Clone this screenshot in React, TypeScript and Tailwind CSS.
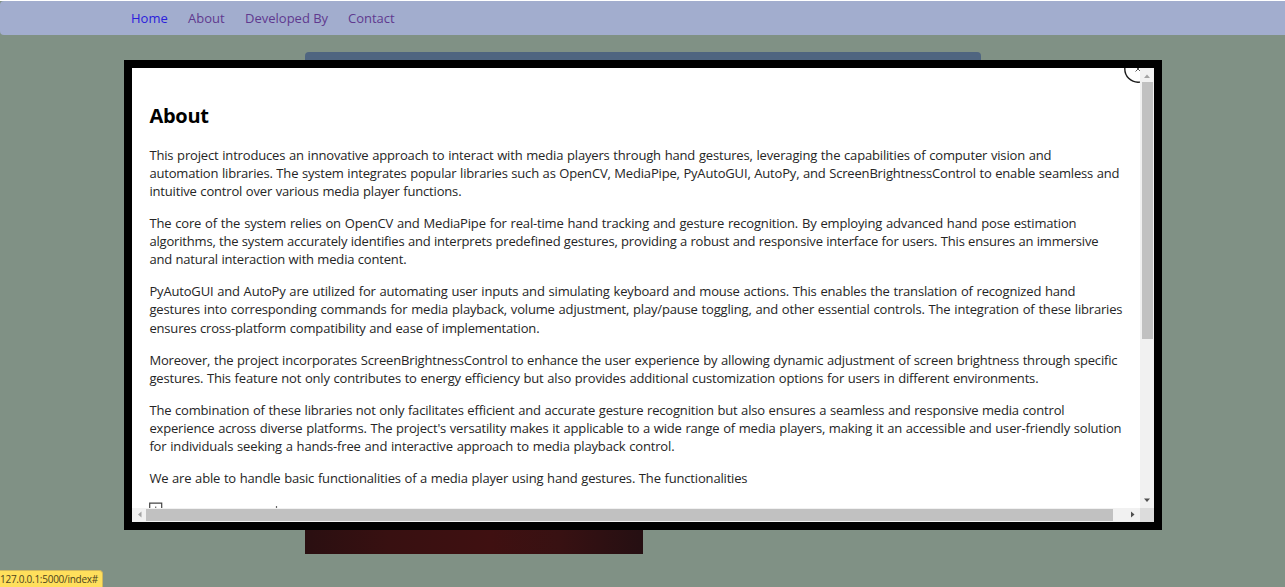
type Line = { text: string; width: string };

const paragraphs: Line[][] = [
  [
    { text: "This project introduces an innovative approach to interact with media players through hand gestures, leveraging the capabilities of computer vision and", width: "w-[902px]" },
    { text: "automation libraries. The system integrates popular libraries such as OpenCV, MediaPipe, PyAutoGUI, AutoPy, and ScreenBrightnessControl to enable seamless and", width: "w-[970px]" },
    { text: "intuitive control over various media player functions.", width: "w-[312px]" },
  ],
  [
    { text: "The core of the system relies on OpenCV and MediaPipe for real-time hand tracking and gesture recognition. By employing advanced hand pose estimation", width: "w-[927px]" },
    { text: "algorithms, the system accurately identifies and interprets predefined gestures, providing a robust and responsive interface for users. This ensures an immersive", width: "w-[949px]" },
    { text: "and natural interaction with media content.", width: "w-[257px]" },
  ],
  [
    { text: "PyAutoGUI and AutoPy are utilized for automating user inputs and simulating keyboard and mouse actions. This enables the translation of recognized hand", width: "w-[926px]" },
    { text: "gestures into corresponding commands for media playback, volume adjustment, play/pause toggling, and other essential controls. The integration of these libraries", width: "w-[973px]" },
    { text: "ensures cross-platform compatibility and ease of implementation.", width: "w-[390px]" },
  ],
  [
    { text: "Moreover, the project incorporates ScreenBrightnessControl to enhance the user experience by allowing dynamic adjustment of screen brightness through specific", width: "w-[968px]" },
    { text: "gestures. This feature not only contributes to energy efficiency but also provides additional customization options for users in different environments.", width: "w-[889px]" },
  ],
  [
    { text: "The combination of these libraries not only facilitates efficient and accurate gesture recognition but also ensures a seamless and responsive media control", width: "w-[915px]" },
    { text: "experience across diverse platforms. The project's versatility makes it applicable to a wide range of media players, making it an accessible and user-friendly solution", width: "w-[972px]" },
    { text: "for individuals seeking a hands-free and interactive approach to media playback control.", width: "w-[525px]" },
  ],
  [
    { text: "We are able to handle basic functionalities of a media player using hand gestures. The functionalities", width: "w-[598px]" },
  ],
];

function Navbar() {
  return (
    <nav className="mt-px flex h-[34px] shrink-0 items-center gap-[20px] rounded-l-[4px] bg-[#a2adce] pl-[131px] pt-[2px] text-[13px] text-[#60398f]">
      <a className="w-[37px] whitespace-nowrap text-[#2a20dc]">Home</a>
      <a className="w-[37px] whitespace-nowrap">About</a>
      <a className="w-[83px] whitespace-nowrap">Developed By</a>
      <a className="whitespace-nowrap">Contact</a>
    </nav>
  );
}

function AboutDialog() {
  return (
    <div className="absolute left-[124px] top-[60px] grid h-[470px] w-[1038px] grid-cols-[1fr_14px] grid-rows-[1fr_14px] border-8 border-black bg-white">
      <div className="relative overflow-hidden pl-[17.4px] pt-[35px]">
        <h2 className="h-[26px] text-[20px] font-bold leading-[26px] tracking-[-0.25px] text-black">About</h2>
        <div className="mt-[16.7px] flex flex-col gap-[13.7px] text-[13px] leading-[18.2px] tracking-[-0.17px] text-[#252525]">
          {paragraphs.map((lines, i) => (
            <p key={i}>
              {lines.map((line) => (
                <span key={line.text} className={`block whitespace-nowrap text-justify [text-align-last:justify] ${line.width}`}>
                  {line.text}
                </span>
              ))}
            </p>
          ))}
        </div>
        <svg className="absolute bottom-0 left-[17px]" width="135" height="6" viewBox="0 0 135 6" fill="none">
          <path d="M.7 6V1.200H12.700V6" stroke="#444" strokeWidth="1.2" />
          <path d="M6.700 6V4.500M127.500 6V4" stroke="#666" strokeWidth="1.2" />
        </svg>
        <svg className="absolute right-0 top-0" width="17" height="16" viewBox="0 0 17 16" fill="none">
          <circle cx="15" cy="1" r="13.200" stroke="#1b1b1b" strokeWidth="1.4" />
          <path d="M12.500 3.500 16 0M14 0 17 3" stroke="#555" strokeWidth="1" />
        </svg>
      </div>
      <div className="flex flex-col items-center justify-between bg-[#f1f1f1]">
        <svg width="14" height="14" viewBox="0 0 14 14"><path d="M4 10 7 6.500 10 10Z" fill="#a3a3a3" /></svg>
        <div className="mb-auto h-[257px] w-[11px] bg-[#c1c1c1]" />
        <svg width="14" height="14" viewBox="0 0 14 14"><path d="M4 4.500H10L7 8Z" fill="#505050" /></svg>
      </div>
      <div className="flex items-center bg-[#f1f1f1]">
        <svg width="14" height="14" viewBox="0 0 14 14"><path d="M9.500 3.500V9.500L6 6.500Z" fill="#a3a3a3" /></svg>
        <div className="mr-auto h-[12px] w-[967px] bg-[#c1c1c1]" />
        <svg width="14" height="14" viewBox="0 0 14 14"><path d="M5 3.500V9.500L8.500 6.500Z" fill="#505050" /></svg>
      </div>
      <div className="bg-[#dcdcdc]" />
    </div>
  );
}

export default function App() {
  return (
    <div className="relative flex h-[587px] w-[1285px] flex-col overflow-hidden bg-[linear-gradient(to_bottom,#ffffff_1px,#809185_1px)] font-['Open_Sans','Noto_Sans',sans-serif]">
      <Navbar />
      <main className="flex grow flex-col pl-[305px] pt-[17px]">
        <div className="h-[50px] w-[676px] rounded-t-[4px] bg-[#4f6580]" />
        <div className="mt-[351px] h-[101px] w-[338px] bg-[linear-gradient(to_right,#2a0f11,#381011_25%,#3f1011_55%,#381112_75%,#250f12)]" />
      </main>
      <AboutDialog />
      <div className="absolute bottom-0 left-0 h-[17px] w-[103px] overflow-hidden whitespace-nowrap rounded-tr-[4px] border-t border-r border-[#d0b75c] bg-[#ffdf5c] text-[10px] leading-[17px] tracking-[-0.26px] text-[#4c431c]">
        127.0.0.1:5000/index#
      </div>
    </div>
  );
}
